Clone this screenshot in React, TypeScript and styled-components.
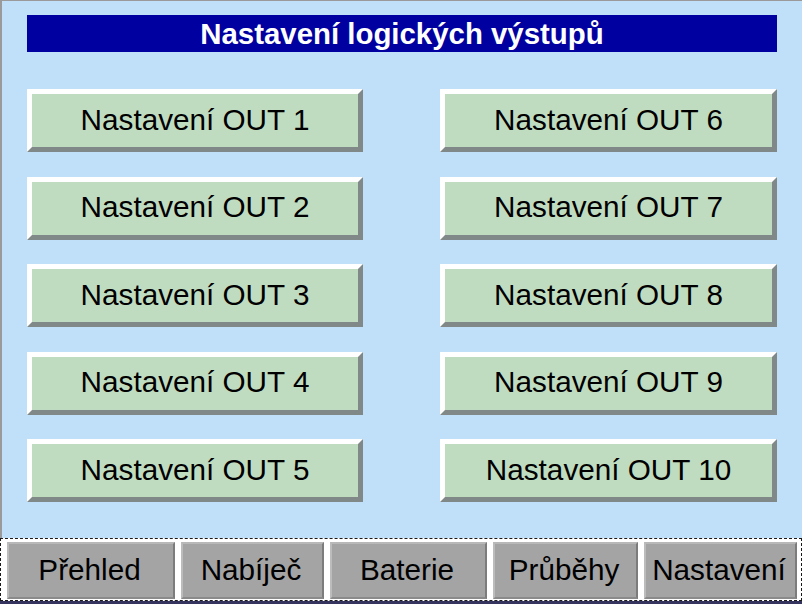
import React from "react";
import styled, { createGlobalStyle } from "styled-components";

const GlobalStyle = createGlobalStyle`
  html, body {
    margin: 0;
    padding: 0;
    background: #c0e0fa;
  }
  * {
    box-sizing: border-box;
  }
`;

const Screen = styled.div`
  width: 802px;
  height: 604px;
  display: flex;
  flex-direction: column;
  font-family: "Liberation Sans", Arial, sans-serif;
  background: #c0e0fa;
  overflow: hidden;
`;

const Panel = styled.div`
  flex: 1;
  border-top: 1px solid #9a9a9a;
  border-left: 2px solid #9a9a9a;
  padding: 14px 0 0 25px;
`;

const TitleBar = styled.div`
  width: 750px;
  height: 37px;
  background: #0000a0;
  color: #ffffff;
  font-size: 29.4px;
  font-weight: bold;
  display: flex;
  align-items: center;
  justify-content: center;
`;

const ButtonGrid = styled.div`
  margin-top: 37px;
  display: grid;
  grid-template-columns: 336px 337px;
  grid-auto-rows: 63px;
  column-gap: 77px;
  row-gap: 24.5px;
`;

const OutButton = styled.button`
  background: #c0dcc0;
  border: 5px solid;
  border-color: #ffffff #808888 #808888 #ffffff;
  font-family: "Liberation Sans", Arial, sans-serif;
  font-size: 29.7px;
  color: #000000;
  display: flex;
  align-items: center;
  justify-content: center;
  padding: 0 0 2px 0;
  cursor: pointer;
`;

const NavBar = styled.div`
  height: 63px;
  background: #ffffff;
  border: 1px dashed #1a1a1a;
  padding: 3px 2px 1px 6px;
  display: flex;
  gap: 6px;
`;

const NavButton = styled.button<{ $w: number }>`
  width: ${(p) => p.$w}px;
  height: 100%;
  background: #a4a4a4;
  border: 2px solid;
  border-color: #b8b8b8 #7c7c7c #8a8a8a #bcbcbc;
  font-family: "Liberation Sans", Arial, sans-serif;
  font-size: 29.7px;
  color: #000000;
  display: flex;
  align-items: center;
  justify-content: center;
  padding: 0 3px 2px 0;
  cursor: pointer;
`;

const Footer = styled.div`
  height: 3px;
  background: #34345e;
`;

const outs = [1, 6, 2, 7, 3, 8, 4, 9, 5, 10];

const tabs = [
  { label: "Přehled", w: 168 },
  { label: "Nabíječ", w: 143 },
  { label: "Baterie", w: 157 },
  { label: "Průběhy", w: 145 },
  { label: "Nastavení", w: 153 },
];

export default function App() {
  return (
    <>
      <GlobalStyle />
      <Screen>
        <Panel>
          <TitleBar>Nastavení logických výstupů</TitleBar>
          <ButtonGrid>
            {outs.map((n) => (
              <OutButton key={n}>Nastavení OUT {n}</OutButton>
            ))}
          </ButtonGrid>
        </Panel>
        <NavBar>
          {tabs.map((t) => (
            <NavButton key={t.label} $w={t.w}>
              {t.label}
            </NavButton>
          ))}
        </NavBar>
        <Footer />
      </Screen>
    </>
  );
}
